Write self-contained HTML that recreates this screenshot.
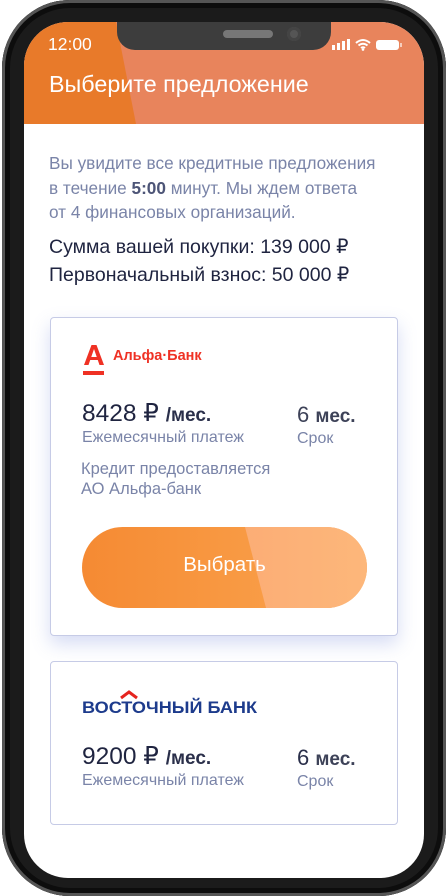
<!DOCTYPE html>
<html><head><meta charset="utf-8"><style>
*{margin:0;padding:0;box-sizing:border-box}
body{width:448px;height:896px;background:#fff;position:relative;overflow:hidden;font-family:"Liberation Sans","DejaVu Sans",sans-serif}
.phone{position:absolute;left:2px;top:0;width:444px;height:896px;border-radius:68px;background:#1b1b1b;box-shadow:inset 0 0 0 3px #555,inset 0 0 0 8px #0d0d0d}
.screen{position:absolute;left:24px;top:22px;width:400px;height:856px;border-radius:44px;background:#fff;overflow:hidden}
.hdr{position:absolute;left:0;top:0;width:400px;height:102px;background:#e8845c}
.hdr .dk{position:absolute;left:0;top:0;width:400px;height:102px;background:#e87a2a;clip-path:polygon(0 0,92px 0,112px 102px,0 102px)}
.notch{position:absolute;left:93px;top:0;width:214px;height:28px;background:#3d3d3d;border-radius:0 0 18px 18px}
.spk{position:absolute;left:106px;top:8px;width:50px;height:8px;border-radius:4px;background:#777}
.cam{position:absolute;left:170px;top:5px;width:14px;height:14px;border-radius:50%;background:#555;box-shadow:inset 0 0 0 3px #444}
.t{position:absolute;white-space:nowrap}
.card{position:absolute;left:26px;width:348px;border:1px solid #c6cbe6;border-radius:4px;background:#fff}
.g{color:#7a84a8}
.d{color:#1f2440}
</style></head><body>
<div class="phone"></div>
<div class="screen">
 <div class="hdr"><div class="dk"></div></div>
 <div class="notch"><div class="spk"></div><div class="cam"></div></div>
 <div class="t" style="left:24px;top:12px;color:#fff;font-size:17.5px">12:00</div>
 <svg style="position:absolute;left:306px;top:16px" width="80" height="14">
  <rect x="2" y="7" width="3" height="5" fill="#fff"/><rect x="7" y="5" width="3" height="7" fill="#fff"/><rect x="12" y="3" width="3" height="9" fill="#fff"/><rect x="17" y="1" width="3" height="11" fill="#fff"/>
  <path d="M26 5 Q33 -1 40 5 M28.5 7.5 Q33 4 37.5 7.5 M31 10 Q33 8.5 35 10" stroke="#fff" stroke-width="2" fill="none"/><circle cx="33" cy="11.5" r="1.3" fill="#fff"/>
  <rect x="46" y="2" width="23" height="10" rx="3" fill="#fff"/><rect x="70" y="5" width="2" height="4" fill="#fff" opacity=".6"/>
 </svg>
 <div class="t" style="left:25px;top:49px;color:#fff;font-size:23.3px">Выберите предложение</div>
 <div class="t g" style="left:25px;top:129px;font-size:17.2px;line-height:24.5px">Вы увидите все кредитные предложения<br>в течение <b style="color:#4d5577">5:00</b> минут. Мы ждем ответа<br>от 4 финансовых организаций.</div>
 <div class="t d" style="left:25px;top:211px;font-size:19.5px;line-height:28px">Сумма вашей покупки: 139 000 ₽<br>Первоначальный взнос: 50 000 ₽</div>

 <div class="card" style="top:295px;height:319px;box-shadow:0 8px 18px rgba(120,140,220,.3)">
  <svg style="position:absolute;left:31px;top:25px" width="24" height="34"><path d="M2 22 L9.5 2 L14.5 2 L22 22 L17.5 22 L12 6 L6.5 22 Z" fill="#ef3124"/><rect x="6" y="14" width="12" height="3" fill="#ef3124"/><rect x="1" y="28" width="21" height="4" fill="#ef3124"/></svg>
  <div class="t" style="left:62px;top:30px;color:#ef3124;font-size:14.5px;font-weight:bold">Альфа·Банк</div>
  <div class="t d" style="left:31px;top:80px;font-size:24.5px">8428 ₽ <span style="font-size:19px;font-weight:bold;color:#2a2f4a">/мес.</span></div>
  <div class="t g" style="left:31px;top:111px;font-size:16px">Ежемесячный платеж</div>
  <div class="t" style="left:246px;top:84px;font-size:22px;color:#3d4258">6 <span style="font-size:19px;font-weight:bold">мес.</span></div>
  <div class="t g" style="left:246px;top:112px;font-size:16px">Срок</div>
  <div class="t g" style="left:30px;top:141px;font-size:16.5px;line-height:20px">Кредит предоставляется<br>АО Альфа-банк</div>
  <div style="position:absolute;left:31px;top:209px;width:285px;height:81px;border-radius:41px;overflow:hidden;background:linear-gradient(90deg,#f58a33,#fba650)">
   <div style="position:absolute;inset:0;background:linear-gradient(90deg,#f9a070,#fdb77a);clip-path:polygon(163px 0,285px 0,285px 81px,184px 81px)"></div>
   <div class="t" style="left:0;width:285px;top:26px;text-align:center;color:#fff;font-size:20.5px">Выбрать</div>
  </div>
 </div>

 <div class="card" style="top:639px;height:164px">
  <svg style="position:absolute;left:31px;top:22px" width="180" height="34">
   <path d="M39 14 L47 8 L55 14" stroke="#e5241f" stroke-width="3" fill="none"/>
   <text x="0" y="29" font-family="Liberation Sans, sans-serif" font-weight="bold" font-size="17" fill="#1d3b8c" textLength="175" lengthAdjust="spacingAndGlyphs">ВОСТОЧНЫЙ БАНК</text>
  </svg>
  <div class="t d" style="left:31px;top:79px;font-size:24.5px">9200 ₽ <span style="font-size:19px;font-weight:bold;color:#2a2f4a">/мес.</span></div>
  <div class="t g" style="left:31px;top:110px;font-size:16px">Ежемесячный платеж</div>
  <div class="t" style="left:246px;top:83px;font-size:22px;color:#2a2f4a">6 <span style="font-size:19px;font-weight:bold;color:#3d4258">мес.</span></div>
  <div class="t g" style="left:246px;top:111px;font-size:16px">Срок</div>
 </div>
</div>
</body></html>
